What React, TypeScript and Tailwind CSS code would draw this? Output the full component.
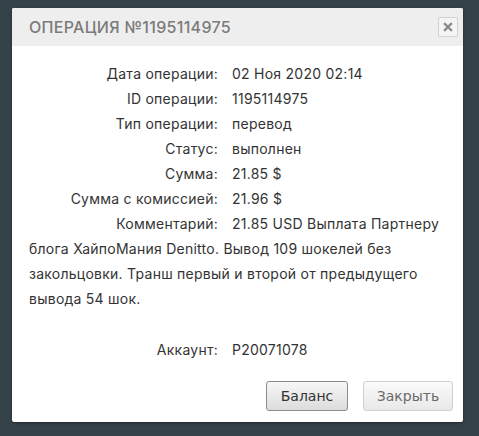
import React from "react";

const rows: [string, string][] = [
  ["Дата операции:", "02 Ноя 2020 02:14"],
  ["ID операции:", "1195114975"],
  ["Тип операции:", "перевод"],
  ["Статус:", "выполнен"],
  ["Сумма:", "21.85 $"],
  ["Сумма с комиссией:", "21.96 $"],
];

function Label({ children }: { children: React.ReactNode }) {
  return (
    <span className="inline-block w-[203px] text-right pr-[14px]">{children}</span>
  );
}

export default function App() {
  return (
    <div className="w-[479px] h-[436px] bg-[#36424a] pt-[8px] pl-[12px]">
      <div className="w-[451px] bg-white rounded-[2px] shadow-[0_1px_3px_rgba(0,0,0,0.4)] overflow-hidden">
        <div className="h-[38px] bg-[#eeeeee] flex items-center justify-between pl-[17px] pr-[5px]">
          <span
            className="text-[16px] font-medium text-[#7b7b7b] tracking-[0.3px]"
            style={{ fontFamily: "Inter, 'Noto Sans', sans-serif" }}
          >
            ОПЕРАЦИЯ №1195114975
          </span>
          <div className="w-[20px] h-[20px] border border-[#d2d2d2] rounded-[2px] bg-[#f4f4f4] flex items-center justify-center">
            <svg width="10" height="10" viewBox="0 0 10 10">
              <path d="M2 2 L8 8 M8 2 L2 8" stroke="#8a8a8a" strokeWidth="2.4" strokeLinecap="square" />
            </svg>
          </div>
        </div>
        <div
          className="px-[17px] pt-[15px] text-[14px] leading-[25px] text-[#333] tracking-[0.25px]"
          style={{ fontFamily: "Inter, 'Noto Sans', sans-serif" }}
        >
          {rows.map(([l, v]) => (
            <div key={l}>
              <Label>{l}</Label>
              <span>{v}</span>
            </div>
          ))}
          <div>
            <Label>Комментарий:</Label>
            21.85 USD Выплата Партнеру блога ХайпоМания Denitto. Вывод 109 шокелей без закольцовки. Транш первый и второй от предыдущего вывода 54 шок.
          </div>
          <div className="mt-[26px]">
            <Label>Аккаунт:</Label>
            <span>P20071078</span>
          </div>
        </div>
        <div
          className="flex justify-end gap-[15px] pr-[10px] pt-[19px] pb-[11px] text-[14px]"
          style={{ fontFamily: "'DejaVu Sans', Verdana, sans-serif" }}
        >
          <button className="w-[82px] h-[30px] rounded-[3px] border border-[#8c8c8c] bg-gradient-to-b from-[#f7f7f7] to-[#dcdcdc] text-[#333]">
            Баланс
          </button>
          <button className="w-[90px] h-[30px] rounded-[3px] border border-[#d0d0d0] bg-gradient-to-b from-[#fafafa] to-[#e9e9e9] text-[#6a6a6a]">
            Закрыть
          </button>
        </div>
      </div>
    </div>
  );
}
